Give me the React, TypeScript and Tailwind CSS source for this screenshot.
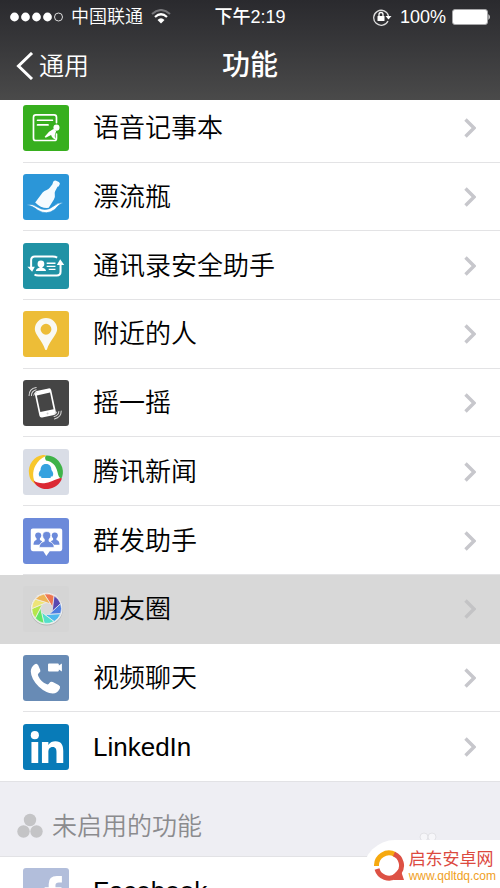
import type { ReactNode } from "react";

function Tile({ color, children }: { color: string; children: ReactNode }) {
  return (
    <svg viewBox="0 0 136 136" className="size-[46px] shrink-0" aria-hidden="true">
      <rect width="136" height="136" rx="9" fill={color} />
      {children}
    </svg>
  );
}

const NotesIcon = () => (
  <Tile color="#37af1e">
    <g fill="none" stroke="#fff" strokeWidth="5" strokeLinecap="round" strokeLinejoin="round">
      <path d="M99 52V36q0-7-7-7H38q-7 0-7 7v62q0 7 7 7h54q7 0 7-7V86" />
      <path d="M43 45h44M43 59h31" />
    </g>
    <circle cx="99" cy="67" r="9" fill="#fff" />
    <path d="M90 71L98 77L94 89Q92 96 99 103L91 100Q84 95 83 89L67 97L64 94L77 79Z" fill="#fff" />
  </Tile>
);

const BottleIcon = () => (
  <Tile color="#2b96d8">
    <path d="M89 24q2-6 9-4l8 4q5 3 2 8l-3 5-3 1-7 13q-2 4-1 9 2 8-3 16L76 100q-21 3-40-16L58 55q5-6 12-8 6-1 9-6l8-11z" fill="#f5fbff" />
    <path d="M10 92q18-6 31 5 26 17 49-2 15-13 29-9-13 3-25 19-24 18-50 2Q27 93 10 92z" fill="#fff" stroke="#2b96d8" strokeWidth="2" />
  </Tile>
);

const ContactsIcon = () => (
  <Tile color="#2092a5">
    <g fill="none" stroke="#fff" strokeWidth="6">
      <path d="M101 43Q96 40 88 40H35Q24 40 24 51V73" />
      <path d="M34 93Q38 96 45 96H100Q111 96 111 85V62" />
      <path d="M70 60h26M70 69h26M76 78h20" strokeWidth="4" />
    </g>
    <path d="M13 70h22L27 85zM100 65h22L110 48z" fill="#fff" />
    <circle cx="53" cy="62" r="10" fill="#fff" />
    <path d="M38 83q0-7 11-10v-6h8v6q11 3 11 10z" fill="#fff" />
  </Tile>
);

const PinIcon = () => (
  <Tile color="#edbd37">
    <path fillRule="evenodd" d="M68 21a33 33 0 0 1 33 33c0 16-23 35-30 59q-3 5-6 0C58 89 35 70 35 54a33 33 0 0 1 33-33zm0 17a16 16 0 1 0 0 32 16 16 0 0 0 0-32z" fill="#f9f9f3" />
  </Tile>
);

const ShakeIcon = () => (
  <Tile color="#454545">
    <g transform="rotate(-12 65 68)">
      <rect x="41" y="28" width="50" height="80" rx="7" fill="#fff" />
      <rect x="46" y="41" width="40" height="50" fill="#454545" />
      <circle cx="66" cy="100" r="3" fill="#cfcfcf" />
    </g>
    <g fill="none" stroke="#ddd" strokeWidth="3" strokeLinecap="round">
      <path d="M18 46q0-21 21-24M25 46q0-13 14-17M32 45q1-7 8-9" />
      <path d="M113 92q0 19-20 23M106 93q-1 12-14 15M99 95q-1 5-7 6" />
    </g>
  </Tile>
);

const NewsIcon = () => (
  <Tile color="#d9dde6">
    <circle cx="68" cy="68" r="44" fill="#fff" />
    <path d="M59 18C33 21 13 47 18 75C20 91 29 100 39 105C28 88 27 67 37 49C43 37 53 27 69 20Q64 17 59 18z" fill="#f8c72c" />
    <path d="M69 19C91 18 110 34 116 55C120 68 118 80 113 88C107 85 104 79 102 68C98 49 87 37 68 34Q62 25 69 19z" fill="#3fb348" />
    <path d="M106 87C91 91 79 100 63 101C51 102 39 99 31 93C38 111 55 120 74 118C94 115 110 103 115 87Q111 84 106 87z" fill="#db2934" />
    <path d="M68 44c11 0 16 8 16 18 6 7 7 14 3 19h-5c2 3-1 5-5 5H59c-4 0-7-2-5-5h-5c-4-5-3-12 3-19 0-10 5-18 16-18z" fill="#36a2df" />
  </Tile>
);

const GroupIcon = () => (
  <Tile color="#6c8ada">
    <path d="M29 31h81q6 0 6 6v55q0 6-6 6H79L69 112 60 98H29q-6 0-6-6V37q0-6 6-6z" fill="#fff" />
    <g fill="#6c8ada">
      <circle cx="45" cy="52" r="9" />
      <path d="M31 79q0-12 9-14v-9h10v9l7 4-9 10z" />
      <circle cx="94" cy="52" r="9" />
      <path d="M108 79q0-12-9-14v-9H89v9l-7 4 9 10z" />
      <g stroke="#fff" strokeWidth="2">
        <path d="M48 87q0-14 15-18v-6q-5-5-5-11a12 12 0 0 1 24 0q0 6-5 11v6q15 4 15 18z" />
      </g>
    </g>
  </Tile>
);

const blades = ["#ee7650", "#5a48b0", "#4c7de0", "#4db7ee", "#54dfcb", "#62e566", "#b5e64b", "#eee478", "#efb456"];

const MomentsIcon = () => (
  <Tile color="#d5d5d5">
    <circle cx="70" cy="69" r="48" fill="#b4b4b4" />
    <circle cx="70" cy="67" r="47" fill="#eee" />
    {blades.map((color, index) => (
      <path
        key={color}
        d="M62.4 23.700A44 44 0 0 1 92 28.900L87.700 63.900L81.600 53.200Z"
        fill={color}
        stroke="#f0f0f0"
        strokeWidth="2"
        transform={`rotate(${index * 40} 70 67)`}
      />
    ))}
    <circle cx="70" cy="67" r="17" fill="#d9d9d9" />
  </Tile>
);

const VideoIcon = () => (
  <Tile color="#688bb5">
    <path d="M35 27q6-4 10 3l6 14q2 6-4 9-5 3-2 9 8 17 24 24 6 3 9-3 4-6 10-3l17 9q7 4 4 10-7 14-21 15-20-1-41-20-23-22-24-45 0-14 12-22z" fill="#fff" />
    <path d="M77 25h26q3 0 3 3v3l9-6v24l-9-6v3q0 3-3 3H77q-3 0-3-3V28q0-3 3-3z" fill="#fff" />
  </Tile>
);

const LinkedInIcon = () => (
  <Tile color="#087bb8">
    <g fill="#fff">
      <circle cx="35" cy="33" r="12" />
      <path d="M25 53h20v62H25zM56 53h19v9c5-8 12-11 21-11 18 0 23 12 23 29v35H99V84c0-9-2-16-11-16-10 0-13 7-13 16v31H56z" />
    </g>
  </Tile>
);

const FacebookIcon = () => (
  <Tile color="#b2bedb">
    <path d="M76 136V76H64V57h12V47q0-23 24-23h15v19h-9q-10 0-10 8v6h18l-3 19H96v60z" fill="#fff" />
  </Tile>
);

const features = [
  { name: "语音记事本", icon: <NotesIcon /> },
  { name: "漂流瓶", icon: <BottleIcon /> },
  { name: "通讯录安全助手", icon: <ContactsIcon /> },
  { name: "附近的人", icon: <PinIcon /> },
  { name: "摇一摇", icon: <ShakeIcon /> },
  { name: "腾讯新闻", icon: <NewsIcon /> },
  { name: "群发助手", icon: <GroupIcon /> },
  { name: "朋友圈", icon: <MomentsIcon />, pressed: true },
  { name: "视频聊天", icon: <VideoIcon /> },
  { name: "LinkedIn", icon: <LinkedInIcon /> },
];

function FeatureRow({ name, icon, pressed, last }: { name: string; icon: ReactNode; pressed?: boolean; last?: boolean }) {
  return (
    <li className={pressed ? "flex bg-[#d8d8d8]" : "flex bg-white"}>
      <button type="button" className="flex min-w-0 flex-1 items-stretch pl-[23px] text-left">
        <span className="flex items-center">{icon}</span>
        <span className="relative flex flex-1 items-center justify-between pr-6 pl-6">
          <span className="text-[26px] leading-8 font-[350] text-black">{name}</span>
          <svg viewBox="0 0 12 20" className={pressed ? "h-5 w-3 text-[#c3c3c5]" : "h-5 w-3 text-[#c7c7cc]"} fill="none" stroke="currentColor" strokeWidth="3.4" aria-hidden="true">
            <path d="M1.5 1.5L10 10L1.5 18.5" />
          </svg>
          {!last && !pressed && <span className="absolute right-0 bottom-0 -left-[46px] h-px bg-[#e3e3e5]" />}
        </span>
      </button>
    </li>
  );
}

function StatusBar() {
  return (
    <div className="grid h-8 grid-cols-[1fr_auto_1fr] items-center px-[10px] pt-px text-[18px] leading-6">
      <div className="flex items-center">
        <svg viewBox="0 0 54 10" className="mr-[7px] h-[10px] w-[54px]" fill="#fff" aria-hidden="true">
          <circle cx="4.5" cy="5" r="4.4" />
          <circle cx="15.5" cy="5" r="4.4" />
          <circle cx="26.5" cy="5" r="4.4" />
          <circle cx="37.5" cy="5" r="4.4" />
          <circle cx="48.5" cy="5" r="4" fill="none" stroke="#ddd" />
        </svg>
        <span className="font-[350]">中国联通</span>
        <svg viewBox="0 0 20 15" className="ml-2 h-[15px] w-5" fill="none" aria-hidden="true">
          <path d="M1 5Q10-3 19 5" stroke="#77777b" strokeWidth="2" />
          <path d="M4 8Q10 2.500 16 8" stroke="#fff" strokeWidth="2.2" />
          <path d="M6.500 11Q10 7.500 13.500 11L10 14.500Z" fill="#fff" />
        </svg>
      </div>
      <span className="font-medium">下午2:19</span>
      <div className="flex items-center justify-end">
        <svg viewBox="0 0 20 18" className="mr-2 h-[18px] w-5" fill="none" aria-hidden="true">
          <path d="M16 13A7.500 7.500 0 1 1 16.500 8" stroke="#ddd" strokeWidth="1.300" />
          <path d="M13.500 8h6l-3 3.500z" fill="#fff" />
          <rect x="5.500" y="8" width="7" height="5" rx=".5" fill="#fff" />
          <path d="M7 8V6.500a2 2 0 0 1 4 0V8" stroke="#fff" strokeWidth="1.300" />
        </svg>
        <span>100%</span>
        <svg viewBox="0 0 38 16" className="ml-[6px] h-4 w-[38px]" aria-hidden="true">
          <rect x=".5" y=".5" width="35" height="15" rx="2.500" fill="#fff" stroke="#a6a6a8" />
          <path d="M36.500 5q2.500 3 0 6z" fill="#fff" />
        </svg>
      </div>
    </div>
  );
}

export default function App() {
  return (
    <div className="relative h-screen overflow-hidden bg-white font-['Liberation_Sans','Noto_Sans_CJK_SC',sans-serif]">
      <header className="relative z-10 h-[100px] bg-linear-to-b from-[#2a2a2e] to-[#4a4a4a] text-white">
        <StatusBar />
        <div className="grid h-[68px] grid-cols-[1fr_auto_1fr] items-center px-4">
          <button type="button" className="flex items-center gap-[5px] justify-self-start text-[25px] leading-9 font-[350]">
            <svg viewBox="0 0 18 28" className="h-7 w-[18px]" fill="none" stroke="#fff" strokeWidth="3" aria-hidden="true">
              <path d="M16 1L2.500 14L16 27" />
            </svg>
            通用
          </button>
          <h1 className="text-[28px] leading-9 font-medium">功能</h1>
        </div>
      </header>
      <main>
        <ul className="-mt-[6px] grid min-h-[687px] auto-rows-fr">
          {features.map((feature, index) => (
            <FeatureRow key={feature.name} {...feature} last={index === features.length - 1} />
          ))}
        </ul>
        <section>
          <h2 className="flex h-[76px] items-center gap-2 border-y border-[#e2e2e5] bg-[#eeeef3] pt-[14px] pl-4 text-[25px] leading-8 font-[350] text-[#8b8b8e]">
            <svg viewBox="0 0 28 26" className="h-[26px] w-7" fill="#c4c4c6" aria-hidden="true">
              <circle cx="14" cy="7" r="6.200" />
              <circle cx="7.500" cy="18.500" r="6.200" />
              <circle cx="20.500" cy="18.500" r="6.200" />
            </svg>
            未启用的功能
          </h2>
          <ul className="grid min-h-[68px]">
            <FeatureRow name="Facebook" icon={<FacebookIcon />} last />
          </ul>
        </section>
      </main>
      <svg viewBox="0 0 18 8" className="absolute right-[63px] bottom-12 z-10 h-2 w-[18px]" fill="#f6f6f9" stroke="#e2e2e6" aria-hidden="true">
        <ellipse cx="5" cy="5" rx="4" ry="4" />
        <ellipse cx="13" cy="5" rx="4" ry="4" />
      </svg>
      <a href="#qdltdq" className="absolute right-0 bottom-0 z-10 flex h-12 items-center gap-1 rounded-tl-[32px] bg-white pt-1 pr-1 pl-[10px]">
        <svg viewBox="0 0 32 34" className="h-[34px] w-8" fill="none" strokeWidth="5" aria-hidden="true">
          <path d="M4 20A12.500 12.500 0 0 0 23 27" stroke="#dd5144" />
          <path d="M3.500 17A12.500 12.500 0 0 1 22 5.500" stroke="#f6a90f" />
          <path d="M21 5A12.500 12.500 0 0 1 26 24" stroke="#dd5144" />
          <path d="M19 27L27 19L31 31H21z" fill="#dd5144" />
        </svg>
        <span className="flex flex-col">
          <span className="text-[17px] leading-5 text-[#dc4a3f]">启东安卓网</span>
          <span className="text-[12px] leading-3 text-[#f0a01e]">www.qdltdq.com</span>
        </span>
      </a>
    </div>
  );
}
